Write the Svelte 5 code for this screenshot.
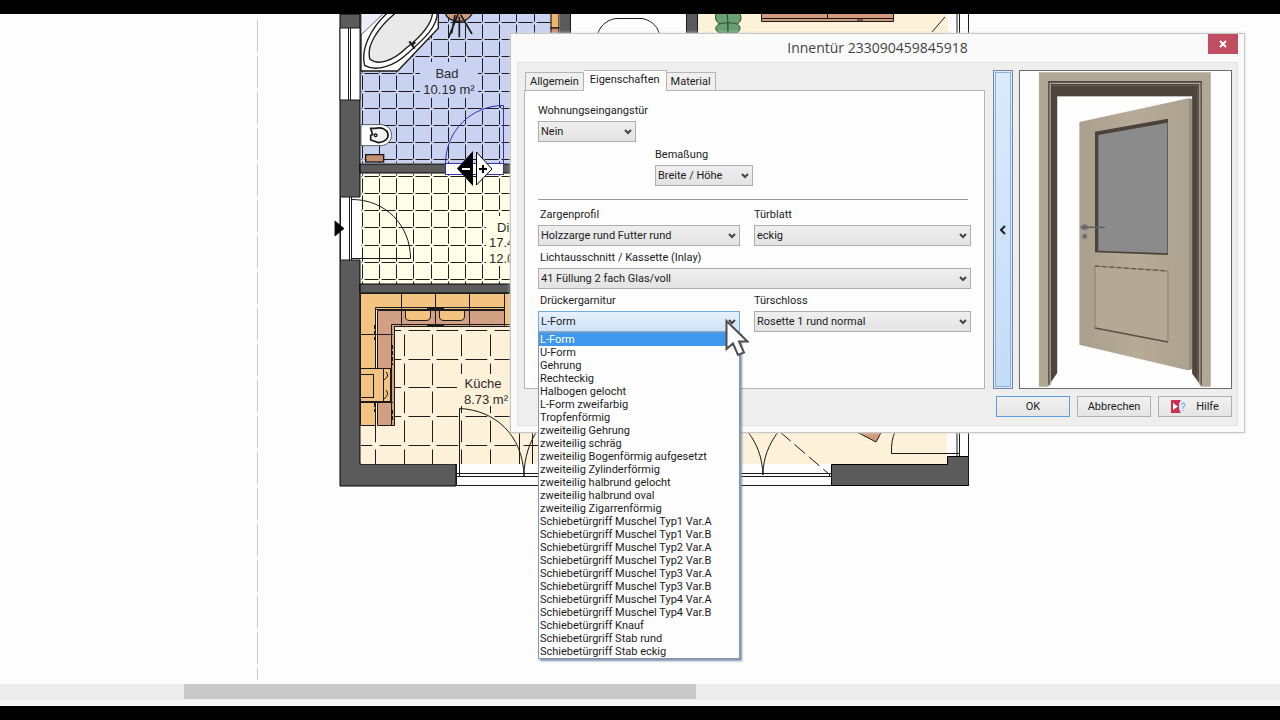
<script>

    const handles = [
        'L-Form', 'U-Form', 'Gehrung', 'Rechteckig', 'Halbogen gelocht', 'L-Form zweifarbig', 'Tropfenförmig',
        'zweiteilig Gehrung', 'zweiteilig schräg', 'zweiteilig Bogenförmig aufgesetzt', 'zweiteilig Zylinderförmig',
        'zweiteilig halbrund gelocht', 'zweiteilig halbrund oval', 'zweiteilig Zigarrenförmig',
        'Schiebetürgriff Muschel Typ1 Var.A', 'Schiebetürgriff Muschel Typ1 Var.B',
        'Schiebetürgriff Muschel Typ2 Var.A', 'Schiebetürgriff Muschel Typ2 Var.B',
        'Schiebetürgriff Muschel Typ3 Var.A', 'Schiebetürgriff Muschel Typ3 Var.B',
        'Schiebetürgriff Muschel Typ4 Var.A', 'Schiebetürgriff Muschel Typ4 Var.B',
        'Schiebetürgriff Knauf', 'Schiebetürgriff Stab rund', 'Schiebetürgriff Stab eckig'
    ];

    const tabs = ['Allgemein', 'Eigenschaften', 'Material'];

    let tab = $state('Eigenschaften');
    let handle = $state('L-Form');

    // joints of a tiled floor, each one stops short of the crossings
    function joints(left, top, right, bottom, x, y, step, gap) {
        let d = '';
        for (let i = -1; x + i * step < right; i++) {
            for (let j = -1; y + j * step < bottom; j++) {
                const px = Math.round(x + i * step) + 0.5;
                const py = Math.round(y + j * step) + 0.5;
                const x1 = Math.max(px + gap, left), x2 = Math.min(px + step - gap + 1, right);
                const y1 = Math.max(py + gap, top), y2 = Math.min(py + step - gap + 1, bottom);
                if (py > top && x2 > x1) d += `M${x1} ${py}H${x2}`;
                if (px > left && y2 > y1) d += `M${px} ${y1}V${y2}`;
            }
        }
        return d;
    }

</script>

{#snippet combo(id, label, value, width)}
    <div class="field {width}">
        <label for={id}>{label}</label>
        <div class="combo">
            <select {id}><option>{value}</option></select>
            <svg class="chevron" viewBox="0 0 8 6" aria-hidden="true"><path d="M1 1 L4 4 L7 1" /></svg>
        </div>
    </div>
{/snippet}

<div class="screen">
    <main class="workspace">
        <!-- floor plan -->
        <svg class="plan" viewBox="0 14 1280 670" aria-label="Grundriss">
            <path d="M257.500 20 V680" stroke="#c8c8c8" stroke-dasharray="32 4" />

            <!-- walls -->
            <path d="M340 14 H360 V464 H456 V486 H340 Z" class="wall" />

            <!-- Bad -->
            <rect x="361" y="14" width="192" height="149" fill="#c9d3f1" />
            <path d={joints(361, 14, 551, 163, 362, 22, 17.15, 2)} class="joint" />
            <rect x="420" y="62" width="58" height="36" fill="#c9d3f1" />
            <rect x="551" y="10" width="8" height="18" fill="#efb56c" stroke="#000" />
            <rect x="551" y="28" width="8" height="6" fill="#c98f6c" stroke="#000" />
            <g transform="translate(330 0) scale(.3333)" class="thick">
                <path d="M93 30 H325 V85 L203 213 H93 Z" fill="#fff" />
                <path d="M93 105 L165 36 H93 Z" fill="#eceffa" stroke-width="2" />
                <path d="M175 36 C120 85 92 150 104 196 C135 215 190 202 235 158 C285 115 322 80 322 36" fill="#fff" />
                <path d="M200 36 C140 85 108 140 120 178 C145 198 190 182 228 145 C270 112 306 75 308 36" fill="#e9e9e9" />
                <path d="M238 124 L254 146 M246 136 L256 126" stroke-width="6" />
                <path d="M345 36 C350 70 415 78 428 36 Z" fill="#cf9a77" />
                <path d="M385 40 L356 112 M388 50 V112 M392 44 L426 102 M375 45 L365 100" stroke-width="5" />
                <path d="M93 374 H150 C196 372 196 438 150 437 H93 Z" fill="#fff" stroke-width="2" />
                <path d="M122 385 H135 C180 375 190 425 145 428 L122 420 V406 L128 404 Z" fill="#f3f3f3" stroke-width="5" />
                <circle cx="137" cy="406" r="4" />
                <rect x="107" y="464" width="54" height="22" fill="#c78f72" />
            </g>
            <text x="447" y="78">Bad</text>
            <text x="449" y="94">10.19 m²</text>

            <path d="M360 164 H510 V173 H360 Z" class="wall" />

            <!-- Diele -->
            <rect x="361" y="174" width="150" height="110" fill="#fefee9" />
            <path d={joints(361, 174, 511, 284, 362, 176, 17.15, 2)} class="joint" />
            <rect x="486" y="216" width="25" height="50" fill="#fefee9" />
            <text x="497" y="232" class="start">Di</text>
            <text x="489" y="247" class="start">17.4</text>
            <text x="489" y="263" class="start">12.0</text>
            <path d="M360 284 H510 V293 H360 Z" class="wall" />

            <!-- Küche -->
            <rect x="361" y="294" width="177" height="170" fill="#fdf2d9" />
            <path d={joints(361, 294, 538, 464, 375, 330, 28.7, 4)} class="joint" />
            <rect x="457" y="374" width="53" height="32" fill="#fdf2d9" />
            <g class="line">
                <path d="M360.500 293.500 H510 V309.500 H375.500 V425.500 H360.500 Z" fill="#f2c381" />
                <path d="M377.500 310.500 H504.500 V326.500 H394.500 V425.500 H377.500 Z" fill="#d2a082" />
                <path d="M504.500 293.500 H511 V326.500 H504.500 Z" fill="#f2c381" />
                <path d="M401.500 294 V309 M435.500 294 V326 M469.500 294 V326 M401.500 310 V326 M361 334.500 H393 M361 402.500 H393" />
                <path d="M375.500 425 V307.500 H504 M391.500 425 V324.500 H510 M427 308.500 H444 M427 325.500 H444" />
                <path d="M405.500 310.500 V316 Q405 320.500 410 320.500 H426 Q430.500 320.500 430.500 316 V310.500 Z" fill="#f2c381" />
                <path d="M439.500 310.500 V316 Q439 320.500 444 320.500 H460 Q464.500 320.500 464.500 316 V310.500 Z" fill="#f2c381" />
                <rect x="360.500" y="368.500" width="30" height="33" fill="#f2c381" />
                <rect x="360.500" y="374.500" width="13" height="23" fill="#f2c381" />
                <path d="M383.500 369 V402 M386 372 Q390 376 384 380 M386 390 Q390 394 384 399" />
                <path d="M392.500 345 V365 M392.500 410 V422 M374.500 325 V340 M374.500 403 V412" stroke-dasharray="4 2" />
            </g>
            <text x="483" y="388">Küche</text>
            <text x="486" y="404">8.73 m²</text>

            <!-- left window and entrance -->
            <g class="line">
                <path d="M340 28 H360 V100 H340 Z" fill="#fff" />
                <path d="M348.500 28 V100 M350.500 28 V100" />
                <rect x="340" y="197" width="21" height="63" fill="#fff" stroke="none" />
                <path d="M340 197 H360 M340 260 H360 M340.500 197 V260 M349.500 197 V260 M351.500 197 V260" />
                <path d="M351 199.500 C385 199 410.500 225 410.500 258.500 H351" />
                <path d="M335 221 L344 228.500 L335 236 Z" fill="#000" />
            </g>

            <!-- selected inner door -->
            <g stroke="#3232b4" fill="none">
                <rect x="445.500" y="163.500" width="58" height="11" fill="#fff" />
                <path d="M445.500 163 C446 130 472 105.500 503.500 105.500 V163 M500.500 105 V108" />
            </g>
            <path d="M457 168.500 L473 151 V186 Z" fill="#000" />
            <path d="M476.500 152 L492 169 L476.500 185 Z" fill="#fff" stroke="#000" />
            <path d="M462 169 H470" stroke="#fff" stroke-width="2" />
            <path d="M479 169 H487 M483 165 V173" stroke="#000" stroke-width="2" />

            <!-- rooms above the dialog -->
            <rect x="560" y="14" width="10" height="20" fill="#5b5b5b" />
            <rect x="687" y="14" width="10" height="20" fill="#5b5b5b" />
            <rect x="698" y="14" width="250" height="20" fill="#fdf2d9" />
            <g class="line">
                <path d="M570.500 14 V33 M686.500 14 V33 M697.500 14 V33 M957 14 V33 M959.500 14 V33 M968.500 14 V33" />
                <path d="M598 33 C601 24 610 18.500 617 18.500 H642 C650 20 657 25 659 33" />
                <path d="M761.500 10 H893.500 V21.500 H761.500 Z M761 18.500 H894 M827.500 14 V18 M857 20 H863" fill="#d09a7a" />
                <path d="M945 17 L932 32" />
            </g>
            <g fill="#6a9f76" stroke="#2b4a33">
                <path d="M728 24 C717 27 713 19 717 11 H729 Z" />
                <path d="M728 24 C741 28 744 17 738 11 H727 Z" />
                <path d="M728 23 C714 22 713 31 720 33 H728 Z" />
                <path d="M728 23 C738 22 744 27 737 33 H728 Z" />
            </g>

            <!-- strip below the dialog -->
            <rect x="538" y="432" width="409" height="32" fill="#fdf2d9" />
            <path d="M831.500 464.500 H947.500 V456.500 H968.500 V485.500 H831.500 Z" class="wall" />
            <g class="line">
                <path d="M456.500 464 V485.500 H832 M456 473.500 H832 M456 476.500 H832 M829.500 473 V476" />
                <path d="M459.500 476 V408.500 C495 410 523 435 524 476 C524 458 530 440 538 430 M519.500 432 V458 M532.500 432 V464" />
                <path d="M748 432 C757 444 762 456 763 475 C763 458 769 444 778 432" />
                <path d="M780 432 L829 474" stroke-dasharray="14 5" />
                <path d="M855 431 L876 442 L882 431 Z" fill="#d09a7a" />
                <path d="M895 432 Q891 440 891.500 453.500 H959 M957 432 V456 M959.500 432 V456 M968.500 432 V486" />
            </g>
        </svg>

        <section class="dialog" aria-label="Innentür 233090459845918">
            <header>
                <h1>Innentür 233090459845918</h1>
                <button class="close" aria-label="Schließen">
                    <svg viewBox="0 0 8 8"><path d="M1 1 L7 7 M7 1 L1 7" /></svg>
                </button>
            </header>

            <div class="body">
                <div class="columns">
                    <div class="pages">
                        <div class="tabs" role="tablist">
                            {#each tabs as name}
                                <button role="tab" aria-selected={tab === name} class:active={tab === name} onclick={() => tab = name}>{name}</button>
                            {/each}
                        </div>
                        <div class="panel">
                            {@render combo('entrance', 'Wohnungseingangstür', 'Nein', 'small')}
                            <div class="middle">
                                {@render combo('measure', 'Bemaßung', 'Breite / Höhe', 'small')}
                            </div>
                            <hr>
                            <div class="grid">
                                {@render combo('frame', 'Zargenprofil', 'Holzzarge rund Futter rund', 'inset')}
                                {@render combo('leaf', 'Türblatt', 'eckig', '')}
                                {@render combo('inlay', 'Lichtausschnitt / Kassette (Inlay)', '41 Füllung 2 fach Glas/voll', 'inset wide')}
                                <div class="field inset open">
                                    <label for="handle">Drückergarnitur</label>
                                    <div class="combo">
                                        <select id="handle" bind:value={handle}>
                                            {#each handles as name}<option>{name}</option>{/each}
                                        </select>
                                        <svg class="chevron" viewBox="0 0 8 6" aria-hidden="true"><path d="M1 1 L4 4 L7 1" /></svg>
                                    </div>
                                    <select class="list" size="25" aria-label="Drückergarnitur Auswahl" bind:value={handle}>
                                        {#each handles as name}<option>{name}</option>{/each}
                                    </select>
                                    <svg class="pointer" viewBox="0 0 24 38" aria-hidden="true">
                                        <path d="M1.500 2 V30 L8 24.500 L13 36 L19 33.500 L14 22.500 H22.500 Z" />
                                    </svg>
                                </div>
                                {@render combo('lock', 'Türschloss', 'Rosette 1 rund normal', '')}
                            </div>
                        </div>
                    </div>

                    <button class="collapse" aria-label="Vorschau einklappen">
                        <svg viewBox="0 0 6 10"><path d="M5 1 L1 5 L5 9" /></svg>
                    </button>

                    <!-- door preview -->
                    <svg class="preview" viewBox="105 32 636 951" preserveAspectRatio="none" aria-label="Vorschau">
                        <defs>
                            <linearGradient id="wood">
                                <stop offset="0" stop-color="#a99f8c" />
                                <stop offset=".5" stop-color="#b8ab98" />
                                <stop offset="1" stop-color="#aca18f" />
                            </linearGradient>
                        </defs>
                        <path d="M162 36 H680 V979 H650 L624 938 V108 H217 V938 L190 979 H162 Z" fill="#b1a795" />
                        <path d="M190 62 H653 V976 L624 940 V108 H217 V938 L190 976 Z" fill="#4d443d" />
                        <path d="M196 975 V69 H647 V970" fill="none" stroke="#b1a795" stroke-width="4" />
                        <path d="M202 76 H641 V960" fill="none" stroke="#6d6257" stroke-width="3" />
                        <path d="M284 185 L613 114 L623 118 V926 L610 930 L284 853 Z" fill="url(#wood)" />
                        <path d="M615 114 L623 116 V926 L615 929 Z" fill="#968b7b" />
                        <path d="M331 214 L551 175 V584 L331 576 Z" fill="#4b423a" />
                        <path d="M341 224 L549 187 V579 L341 571 Z" fill="#8b8b8b" />
                        <path d="M331 617 L551 632 V845 L331 803 Z" fill="#b5a895" stroke="#786c5f" stroke-width="2" />
                        <path d="M331 617 L551 632" fill="none" stroke="#675c50" stroke-width="4" stroke-dasharray="14 8" />
                        <path d="M331 803 L551 845" fill="none" stroke="#5c5248" stroke-width="4" />
                        <ellipse cx="300" cy="501" rx="10" ry="9" fill="#73777b" />
                        <path d="M287 501 H360" stroke="#5f6265" stroke-width="5" />
                        <circle cx="300" cy="528" r="9" fill="#83868a" />
                        <path d="M300 523 V533" stroke="#4a4a4a" stroke-width="4" />
                    </svg>
                </div>

                <footer>
                    <button class="default">OK</button>
                    <button>Abbrechen</button>
                    <button>
                        <svg viewBox="0 0 17 13" aria-hidden="true">
                            <path d="M0 0 H10 Q6 6 10 13 H0 Z" fill="#c9304e" />
                            <path d="M2 3 L7 6.500 L2 10 Z" fill="#fff" />
                            <path d="M10 0 Q6 6 10 13 H12 Q18 6 12 0 Z" fill="#d8e7f3" />
                            <path d="M10 4.500 Q12 2 14 4 Q14.500 6 12 7 V8.500 M12 10 V11" fill="none" stroke="#7fa6c8" />
                        </svg>
                        Hilfe
                    </button>
                </footer>
            </div>
        </section>
    </main>

    <div class="track"><div class="thumb"></div></div>
</div>

<style>

    :global(body) {
        background: #000;
    }

    .screen {
        display: flex;
        flex-direction: column;
        box-sizing: border-box;
        height: 100vh;
        padding: 14px 0;
        overflow: hidden;
        background: #000;
        color: #1c1c1c;
        font: 11px/13px Roboto, Tahoma, sans-serif;
    }

    .workspace {
        position: relative;
        flex: 1;
        min-height: 0;
        background: #fdfdfd;
    }

    .track {
        height: 16px;
        background: #ececec;
        border-bottom: 6px solid #f5f5f5;
    }

    .thumb {
        width: 40%;
        height: 15px;
        margin-left: 14.4%;
        background: #c9c9c9;
    }

    .plan {
        display: block;
        width: 1280px;
        height: 670px;
    }

    .plan text {
        font: 13px "Liberation Sans", sans-serif;
        text-anchor: middle;
        fill: #2a2a2a;
    }

    .plan text.start {
        text-anchor: start;
    }

    .joint {
        stroke: #1d1d1d;
        fill: none;
    }

    .wall {
        fill: #5b5b5b;
        stroke: #000;
    }

    .line {
        fill: none;
        stroke: #1a1a1a;
    }

    .thick {
        fill: none;
        stroke: #1a1a1a;
        stroke-width: 4;
    }

    .dialog {
        position: absolute;
        top: 19px;
        left: 510px;
        box-sizing: border-box;
        width: 735px;
        padding: 0 6px 6px;
        background: #fafafa;
        border: 1px solid #c6c6c6;
        box-shadow: 0 0 3px #ddd;
    }

    header {
        display: grid;
        grid-template-columns: 30px 1fr 30px;
        height: 28px;
    }

    h1 {
        grid-column: 2;
        margin: 0;
        font: 14px/28px "Open Sans", "Noto Sans", sans-serif;
        text-align: center;
        color: #444;
    }

    button {
        padding: 0;
        font: inherit;
        color: inherit;
        border-radius: 0;
    }

    .close {
        display: grid;
        place-items: center;
        height: 20px;
        background: #c14d60;
        border: 0;
    }

    .close svg {
        width: 8px;
        height: 8px;
        stroke: #fff;
        stroke-width: 2;
    }

    .body {
        padding: 7px 5px 8px 6px;
        background: #eee;
        border: 1px solid #e2e2e2;
    }

    .columns {
        display: flex;
    }

    .pages {
        display: flex;
        flex: 1;
        flex-direction: column;
    }

    .tabs {
        display: flex;
        align-items: flex-end;
        height: 20px;
        padding-left: 1px;
    }

    .tabs button {
        height: 18px;
        padding: 0 4px;
        background: #efefef;
        border: 1px solid #b4b4b4;
        border-bottom: 0;
    }

    .tabs button + button {
        border-left: 0;
    }

    .tabs .active {
        z-index: 1;
        height: 21px;
        margin-bottom: -1px;
        padding: 0 6px 3px;
        background: #fdfdfd;
    }

    .panel {
        flex: 1;
        padding: 10px 13px 0;
        background: #fdfdfd;
        border: 1px solid #b4b4b4;
    }

    .field label {
        display: block;
        line-height: 20px;
    }

    .inset label {
        padding-left: 2px;
    }

    .small {
        width: 98px;
    }

    .small label {
        white-space: nowrap;
    }

    .middle {
        margin: 3px 0 0 117px;
    }

    hr {
        margin: 13px 3px 5px 0;
        border: 0;
        border-top: 1px solid #999;
    }

    .grid {
        display: grid;
        grid-template-columns: 202px 1fr;
        gap: 2px 14px;
    }

    .wide {
        grid-column: span 2;
    }

    .combo {
        display: grid;
        align-items: center;
    }

    .combo select {
        grid-area: 1 / 1;
        width: 100%;
        height: 21px;
        padding: 0 18px 0 2px;
        font: inherit;
        color: inherit;
        appearance: none;
        background: linear-gradient(#efefef, #e3e3e3);
        border: 1px solid #adadad;
        border-radius: 0;
        outline: 0;
    }

    .chevron {
        grid-area: 1 / 1;
        justify-self: end;
        width: 8px;
        height: 6px;
        margin-right: 4px;
        fill: none;
        stroke: #444;
        stroke-width: 2;
        pointer-events: none;
    }

    .open {
        position: relative;
    }

    .open .combo select {
        background: linear-gradient(#e6f1fc, #cde2f7);
        border-color: #7ba9d6;
    }

    .list {
        position: absolute;
        top: 41px;
        left: 0;
        z-index: 2;
        box-sizing: border-box;
        width: 202px;
        height: 327px;
        padding: 0;
        overflow: hidden;
        font: inherit;
        color: inherit;
        background: #fdfdfd;
        border: 1px solid #7d98ba;
        border-radius: 0;
        outline: 0;
        box-shadow: 2px 2px 2px #8291a8;
    }

    .list option {
        height: 13px;
        min-height: 13px;
        padding: 0 0 0 1px;
        line-height: 13px;
    }

    .list option:checked {
        background: #3f99ee linear-gradient(#3f99ee, #3f99ee);
        -webkit-text-fill-color: #fff;
    }

    .pointer {
        position: absolute;
        top: 28px;
        left: 187px;
        z-index: 3;
        width: 24px;
        height: 38px;
        fill: #fff;
        stroke: #505050;
        stroke-width: 2;
        pointer-events: none;
    }

    .collapse {
        display: grid;
        place-items: center;
        width: 20px;
        margin: 0 6px 0 8px;
        background: linear-gradient(#dcebfb, #c3dcf5);
        border: 1px solid #6f87a5;
        box-shadow: inset 0 0 0 1px #d9e9fa, inset 0 0 0 2px #8fb3da;
    }

    .collapse svg {
        width: 6px;
        height: 10px;
        fill: none;
        stroke: #222;
        stroke-width: 2;
    }

    .preview {
        box-sizing: border-box;
        width: 213px;
        height: 319px;
        background: #fefefe;
        border: 1px solid #6c6c6c;
    }

    footer {
        display: flex;
        justify-content: flex-end;
        gap: 7px;
        margin-top: 7px;
    }

    footer button {
        display: flex;
        align-items: center;
        justify-content: center;
        gap: 8px;
        width: 74px;
        height: 21px;
        background: linear-gradient(#f1f1f1, #e5e5e5);
        border: 1px solid #b0b0b0;
    }

    footer .default {
        border-color: #5b9fe0;
    }

    footer svg {
        width: 17px;
        height: 13px;
    }

</style>
